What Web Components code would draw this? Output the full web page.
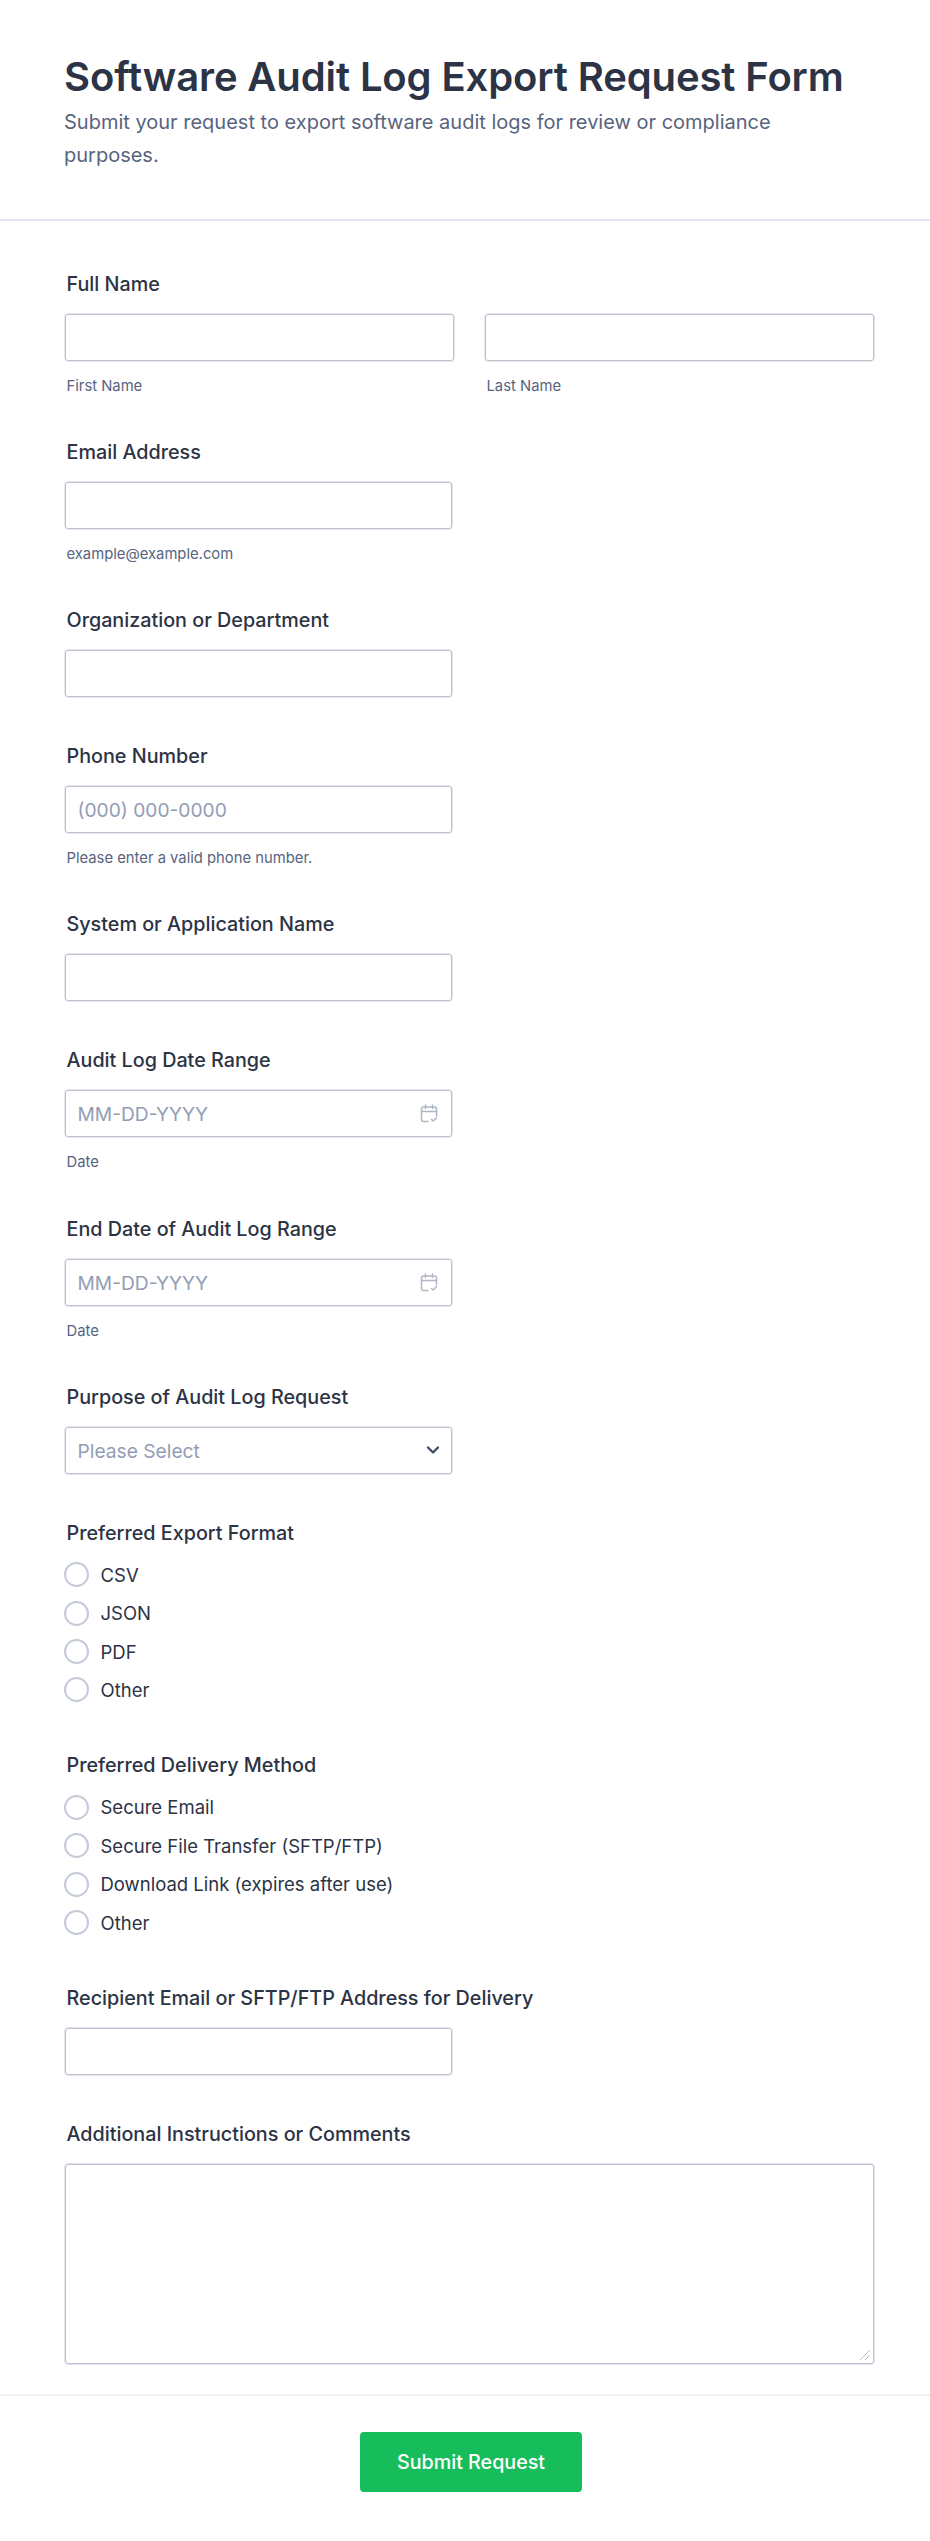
<!DOCTYPE html>
<html lang="en">
<head>
<meta charset="utf-8">
<title>Software Audit Log Export Request Form</title>
<style>
html,body{margin:0;background:#fff}
body{font-family:Inter,"Liberation Sans",sans-serif;color:#2c3345}
</style>
</head>
<body>
<audit-form>
  <form-header slot="header" heading="Software Audit Log Export Request Form">Submit your request to export software audit logs for review or compliance purposes.</form-header>

  <form-field label="Full Name">
    <div style="display:grid;grid-template-columns:1fr 1fr;gap:29px">
      <div><text-box></text-box><sub-label>First Name</sub-label></div>
      <div><text-box></text-box><sub-label>Last Name</sub-label></div>
    </div>
  </form-field>
  <form-field label="Email Address"><text-box narrow></text-box><sub-label>example@example.com</sub-label></form-field>
  <form-field label="Organization or Department"><text-box narrow></text-box></form-field>
  <form-field label="Phone Number"><text-box narrow hint="(000) 000-0000"></text-box><sub-label>Please enter a valid phone number.</sub-label></form-field>
  <form-field label="System or Application Name"><text-box narrow></text-box></form-field>
  <form-field label="Audit Log Date Range"><text-box narrow hint="MM-DD-YYYY" kind="date"></text-box><sub-label>Date</sub-label></form-field>
  <form-field label="End Date of Audit Log Range"><text-box narrow hint="MM-DD-YYYY" kind="date"></text-box><sub-label>Date</sub-label></form-field>
  <form-field label="Purpose of Audit Log Request"><text-box narrow hint="Please Select" kind="select"></text-box></form-field>
  <form-field label="Preferred Export Format" radios>
    <radio-option>CSV</radio-option>
    <radio-option>JSON</radio-option>
    <radio-option>PDF</radio-option>
    <radio-option>Other</radio-option>
  </form-field>
  <form-field label="Preferred Delivery Method" radios>
    <radio-option>Secure Email</radio-option>
    <radio-option>Secure File Transfer (SFTP/FTP)</radio-option>
    <radio-option>Download Link (expires after use)</radio-option>
    <radio-option>Other</radio-option>
  </form-field>
  <form-field label="Recipient Email or SFTP/FTP Address for Delivery"><text-box narrow></text-box></form-field>
  <form-field label="Additional Instructions or Comments" last><text-box kind="area"></text-box></form-field>

  <form-footer slot="footer">Submit Request</form-footer>
</audit-form>

<script>
function define(name, html, init){
  customElements.define(name, class extends HTMLElement{
    constructor(){
      super();
      const root=this.attachShadow({mode:'open'});
      root.innerHTML=html;
    }
    connectedCallback(){ if(init) init.call(this,this.shadowRoot); }
  });
}

define('audit-form',`
<style>
:host{display:block;width:930px;background:#fff}
main{padding:51px 55px 0 64px}
</style>
<slot name="header"></slot>
<main><slot></slot></main>
<slot name="footer"></slot>`);

define('form-header',`
<style>
:host{display:block;padding:52px 65px 0 64px;border-bottom:2px solid #e3e5ee;box-sizing:border-box;height:221px}
h1{margin:0;font:600 40px/50px Inter,sans-serif;color:#2c3345;letter-spacing:-.12px}
p{margin:4px 0 0;font:400 20px/33px Inter,sans-serif;color:#57647e}
</style>
<h1></h1><p><slot></slot></p>`,function(r){r.querySelector('h1').textContent=this.getAttribute('heading')});

define('form-field',`
<style>
:host{display:block;margin-bottom:46.100px}
.l{font:450 19.750px/24px Inter,sans-serif;color:#2c3345;margin:0 0 17px 2.500px}
:host([radios]) .l{margin-bottom:18px}
:host([radios]){margin-bottom:51.500px}
:host([last]){margin-bottom:29px}
</style>
<div class="l"></div><slot></slot>`,function(r){r.querySelector('.l').textContent=this.getAttribute('label')});

define('sub-label',`
<style>
:host{display:block;font:400 14.800px/18px Inter,sans-serif;color:#57647e;margin:15px 0 -1px 2.500px}
</style><slot></slot>`);

define('text-box',`
<style>
:host{display:block;box-sizing:border-box;height:49px;border:1px solid #e4e6ed;box-shadow:inset 0 0 0 1px #bcc1ce;border-radius:4px;background:#fff;position:relative;
  font:400 19.200px/49px Inter,sans-serif;color:#929db5;padding:0 12.500px}
:host([narrow]){width:389px}
:host([kind=area]){height:202px}
svg{position:absolute;display:none}
:host([kind=date]) .cal{display:block;right:14.500px;top:14px}
:host([kind=select]) .chev{display:block;right:12px;top:18px}
:host([kind=area]) .grip{display:block;right:3px;bottom:3px}
</style>
<span></span>
<svg class="cal" width="18" height="19" viewBox="0 0 18 19" fill="none" stroke="#aeb6c7" stroke-width="1.5" stroke-linecap="round" stroke-linejoin="round"><path d="M8 17.500H3.500A2 2 0 0 1 1.500 15.500V5a2 2 0 0 1 2-2h11a2 2 0 0 1 2 2v7"/><path d="M1.500 7.500h15M5.500 1v3.500M12.500 1v3.500"/><path d="M11.500 15.500l1.600 1.500 3.400-3.200"/></svg>
<svg class="chev" width="14" height="10" viewBox="0 0 14 10" fill="none" stroke="#3e4a61" stroke-width="2.300" stroke-linecap="round" stroke-linejoin="round"><path d="M2 2.500l5 5 5-5"/></svg>
<svg class="grip" width="12" height="12" viewBox="0 0 12 12" fill="none" stroke="#b9bdc9" stroke-width="1"><path d="M1 11L11 1M6 11l5-5"/></svg>`,
function(r){r.querySelector('span').textContent=this.getAttribute('hint')||''});

define('radio-option',`
<style>
:host{display:flex;align-items:center;height:24px;margin-bottom:14.400px;font:400 18.500px/24px Inter,sans-serif;color:#2c3345;gap:11.500px}
:host(:last-child){margin-bottom:0}
i{flex:none;width:25px;height:25px;box-sizing:border-box;border:2px solid #c3cad8;border-radius:50%;background:#fff}
</style>
<i></i><span><slot></slot></span>`);

define('form-footer',`
<style>
:host{display:flex;justify-content:center;border-top:2px solid #f0f1f6;height:147px;box-sizing:border-box;padding:36px 0 0 12px}
button{width:222px;height:60px;border:0;border-radius:4px;background:#18bd5b;color:#fff;font:500 19.700px/24px Inter,sans-serif;padding:0}
</style>
<button type="button"><slot></slot></button>`);
</script>
</body>
</html>
